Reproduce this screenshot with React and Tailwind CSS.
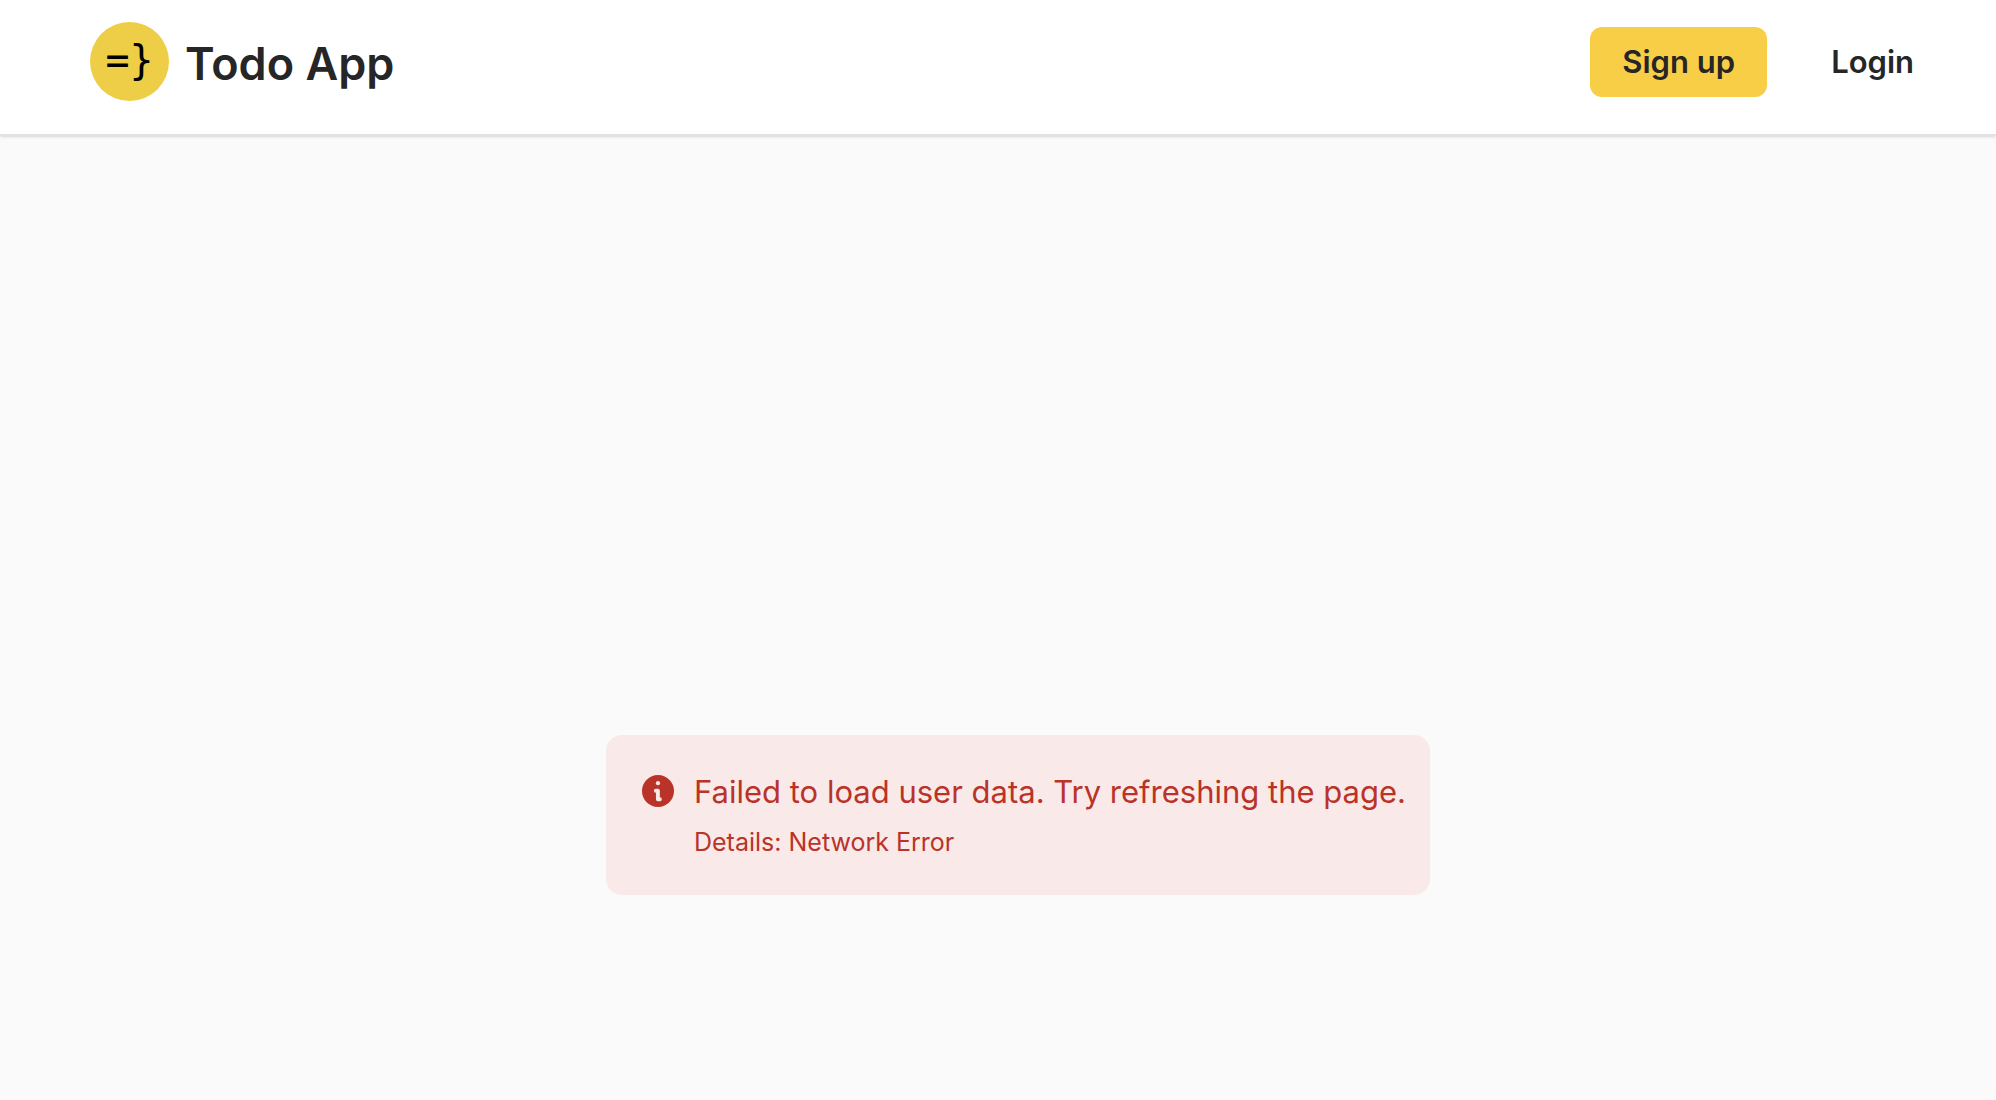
function Logo() {
  return (
    <span
      aria-hidden="true"
      className="flex size-[79px] items-center justify-center rounded-full bg-[#eece46] pb-1 font-['DejaVu_Sans_Mono',monospace] text-[40px] leading-none font-normal text-black"
    >
      =&#125;
    </span>
  );
}

function InfoIcon() {
  return (
    <svg viewBox="0 0 32 32" className="mt-2 size-8 shrink-0" aria-hidden="true">
      <circle cx="16" cy="16" r="16" fill="#b93329" />
      <circle cx="16" cy="8.2" r="2.1" fill="#f9e9e8" />
      <path
        d="M13.8 15.8H15.9V24.3H17.9"
        fill="none"
        stroke="#f9e9e8"
        strokeWidth="3.9"
        strokeLinecap="round"
        strokeLinejoin="round"
      />
    </svg>
  );
}

function Header() {
  return (
    <header className="flex items-start justify-between border-b-2 border-[#e2e2e2] bg-white pt-[22px] pr-[50px] pb-[33px] pl-[90px] shadow">
      <a href="/" className="flex items-center gap-4 text-[45px] font-semibold">
        <Logo />
        <span className="pt-1">Todo App</span>
      </a>
      <nav className="flex gap-8 pt-[5px] text-[31px] leading-[70px] font-semibold">
        <a href="/signup" className="rounded-xl bg-[#f8ce46] px-8">
          Sign up
        </a>
        <a href="/login" className="rounded-xl px-8">
          Login
        </a>
      </nav>
    </header>
  );
}

function ErrorAlert() {
  return (
    <div role="alert" className="flex gap-5 rounded-2xl bg-[#f9e9e8] py-8 pr-6 pl-9 text-[#b93329]">
      <InfoIcon />
      <div>
        <p className="text-[31px] leading-[50px]">Failed to load user data. Try refreshing the page.</p>
        <p className="mt-1 text-[25px] leading-[42px]">Details: Network Error</p>
      </div>
    </div>
  );
}

export default function App() {
  return (
    <div className="flex min-h-screen flex-col bg-[#fafafa] font-['Inter',sans-serif] text-[#262626]">
      <Header />
      <main className="flex grow items-end justify-center pr-[50px] pb-[205px] pl-[90px]">
        <ErrorAlert />
      </main>
    </div>
  );
}
